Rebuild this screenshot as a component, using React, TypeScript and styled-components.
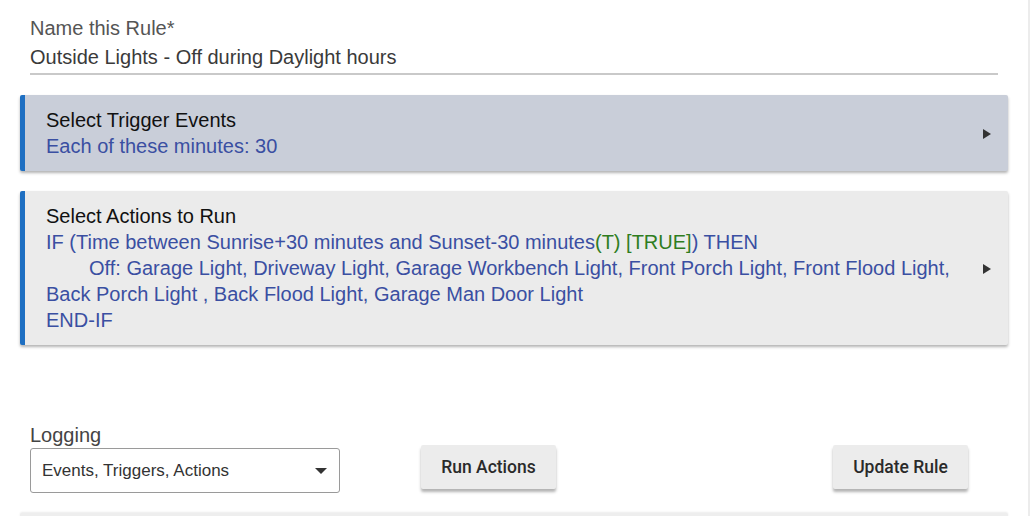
import React, { ReactElement } from 'react';
import styled, { createGlobalStyle } from 'styled-components';

const GlobalStyle = createGlobalStyle`
  html, body {
    margin: 0;
    padding: 0;
    background: #ffffff;
    font-family: "Liberation Sans", Arial, sans-serif;
    overflow: hidden;
  }
`;

const Page = styled.div`
  width: 988px;
  height: 516px;
  padding: 0 20px;
  border-right: 2px solid #ececec;
  overflow: hidden;
`;

const Field = styled.div`
  margin: 0 10px;
  padding-top: 16px;
`;

const FieldLabel = styled.div`
  font-size: 20px;
  line-height: 24px;
  color: #555555;
`;

const FieldValue = styled.div`
  font-size: 20px;
  line-height: 28px;
  padding: 3px 0 2px;
  color: #3a3a3a;
  border-bottom: 2px solid #c9c9c9;
`;

const Card = styled.div<{ $bg: string }>`
  display: flex;
  align-items: center;
  background: ${(p) => p.$bg};
  border-left: 5px solid #1e6fc2;
  border-radius: 2px;
  box-shadow: 0 2px 3px rgba(0, 0, 0, 0.3);
  padding: 12px 17px 12px 21px;
  margin-top: 20px;
`;

const CardBody = styled.div`
  flex: 1;
  font-size: 20px;
  line-height: 26px;
`;

const CardTitle = styled.div`
  color: #111111;
`;

const Line = styled.div<{ $indent?: number }>`
  color: #3a4fa2;
  text-indent: ${(p) => p.$indent || 0}px;
`;

const Green = styled.span`
  color: #2f7d1e;
`;

const Arrow = styled.div`
  width: 0;
  height: 0;
  border-top: 5px solid transparent;
  border-bottom: 5px solid transparent;
  border-left: 8px solid #333333;
  margin-top: 2px;
`;

const Controls = styled.div`
  display: flex;
  align-items: flex-end;
  margin-top: 78px;
  padding-left: 10px;
`;

const SelectGroup = styled.div`
  width: 310px;
`;

const SelectLabel = styled.div`
  font-size: 20px;
  line-height: 24px;
  color: #444444;
  margin-bottom: 1px;
`;

const SelectBox = styled.div`
  display: flex;
  align-items: center;
  justify-content: space-between;
  box-sizing: border-box;
  height: 45px;
  border: 1px solid #9a9a9a;
  border-radius: 3px;
  padding: 0 12px 0 11px;
  font-size: 17px;
  color: #333333;
`;

const Caret = styled.div`
  width: 0;
  height: 0;
  border-left: 6px solid transparent;
  border-right: 6px solid transparent;
  border-top: 6px solid #333333;
`;

const Button = styled.button<{ $offset: number }>`
  margin-left: ${(p) => p.$offset}px;
  margin-bottom: 4px;
  width: 135px;
  height: 44px;
  border: none;
  border-radius: 2px;
  background: #ececec;
  box-shadow: 0 3px 3px rgba(0, 0, 0, 0.3);
  font-family: Roboto, "Liberation Sans", sans-serif;
  font-weight: 500;
  font-size: 17.5px;
  color: #2a2a2a;
`;

const NextCard = styled.div`
  height: 24px;
  margin-top: 20px;
  background: #eeeeee;
  border-radius: 2px;
  box-shadow: 0 -1px 2px rgba(0, 0, 0, 0.08);
`;

const App = (): ReactElement => {
  return (
    <>
      <GlobalStyle />
      <Page>
        <Field>
          <FieldLabel>Name this Rule*</FieldLabel>
          <FieldValue>Outside Lights - Off during Daylight hours</FieldValue>
        </Field>

        <Card $bg="#c9ced9">
          <CardBody>
            <CardTitle>Select Trigger Events</CardTitle>
            <Line>Each of these minutes: 30</Line>
          </CardBody>
          <Arrow />
        </Card>

        <Card $bg="#ebebeb">
          <CardBody>
            <CardTitle>Select Actions to Run</CardTitle>
            <Line>
              IF (Time between Sunrise+30 minutes and Sunset-30 minutes
              <Green>(T) [TRUE]</Green>) THEN
            </Line>
            <Line $indent={43}>
              Off: Garage Light, Driveway Light, Garage Workbench Light, Front Porch Light, Front Flood Light,
            </Line>
            <Line>Back Porch Light , Back Flood Light, Garage Man Door Light</Line>
            <Line>END-IF</Line>
          </CardBody>
          <Arrow />
        </Card>

        <Controls>
          <SelectGroup>
            <SelectLabel>Logging</SelectLabel>
            <SelectBox>
              <span>Events, Triggers, Actions</span>
              <Caret />
            </SelectBox>
          </SelectGroup>
          <Button $offset={81}>Run Actions</Button>
          <Button $offset={277}>Update Rule</Button>
        </Controls>

        <NextCard />
      </Page>
    </>
  );
};

export default App;
